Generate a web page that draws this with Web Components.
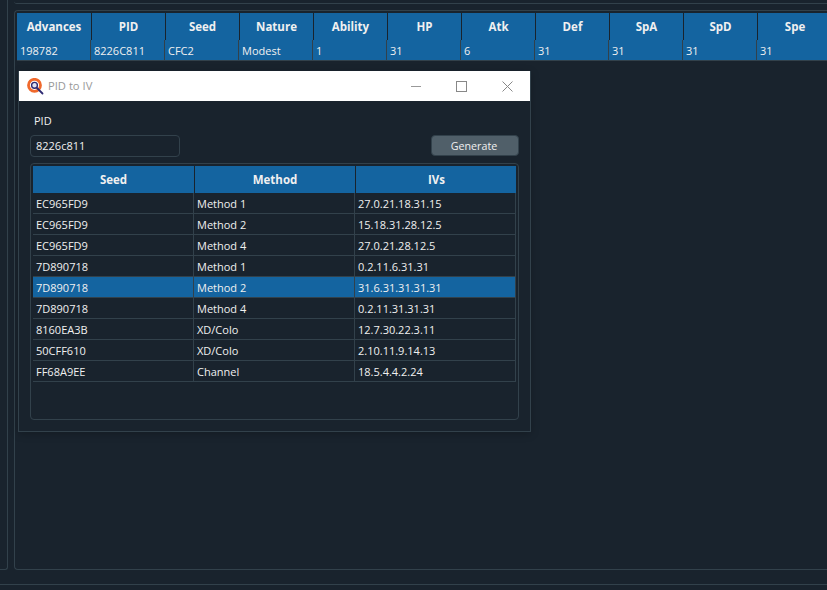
<!DOCTYPE html>
<html>
<head>
<meta charset="utf-8">
<title>PID to IV</title>
<style>
    html, body { margin: 0; height: 100%; background: #19232d; overflow: hidden; }
    body { font: 11px "Open Sans", "Noto Sans", "Liberation Sans", sans-serif; color: #f0f0f0; }
</style>
</head>
<body>
<main-shell>
    <result-table slot="table" widths="74,74,74,74,74,74,74,74,74,74,74" header-height="27" row-height="20"
        headers="Advances,PID,Seed,Nature,Ability,HP,Atk,Def,SpA,SpD,Spe"
        rows="198782,8226C811,CFC2,Modest,1,31,6,31,31,31,31" selected="0"></result-table>
    <tool-window slot="window" heading="PID to IV">
        <pid-form>
            <result-table widths="161,161,161" header-height="27" row-height="20" selected="4"
                headers="Seed,Method,IVs"
                rows="EC965FD9,Method 1,27.0.21.18.31.15|EC965FD9,Method 2,15.18.31.28.12.5|EC965FD9,Method 4,27.0.21.28.12.5|7D890718,Method 1,0.2.11.6.31.31|7D890718,Method 2,31.6.31.31.31.31|7D890718,Method 4,0.2.11.31.31.31|8160EA3B,XD/Colo,12.7.30.22.3.11|50CFF610,XD/Colo,2.10.11.9.14.13|FF68A9EE,Channel,18.5.4.4.2.24"></result-table>
        </pid-form>
    </tool-window>
</main-shell>

<script>
// old QDarkStyle palette
// bg #19232d, border #32414b, button #505f69, selected #1464a0

class ResultTable extends HTMLElement {
    connectedCallback() {
        this.attachShadow({ mode: 'open' });
        const widths = this.getAttribute('widths').split(',').map(Number);
        const headers = this.getAttribute('headers').split(',');
        const rows = this.getAttribute('rows').split('|').map(r => r.split(','));
        const selected = Number(this.getAttribute('selected'));
        const columns = widths.map(w => `${w}px`).join(' ');
        // header sections sit one pixel right of the body grid lines
        const headColumns = widths.map((w, i) => `${i === 0 ? w + 1 : w}px`).join(' ');

        this.shadowRoot.innerHTML = `
            <style>
                :host { display: block; }
                .row { display: grid; }
                .head {
                    grid-template-columns: ${headColumns};
                    height: ${this.getAttribute('header-height')}px;
                    background: #1464a0;
                    font-size: 11.5px;
                    font-weight: 700;
                    color: #f0f0f0;
                }
                .head span {
                    display: flex;
                    align-items: center;
                    justify-content: center;
                    border-right: 1px solid #19232d;
                    box-sizing: border-box;
                }
                .head span:last-child { border-right: 0; }
                .body {
                    grid-template-columns: ${columns};
                    height: ${this.getAttribute('row-height')}px;
                    border-bottom: 1px solid #32414b;
                }
                .body span {
                    display: flex;
                    align-items: center;
                    padding-left: 4px;
                    border-right: 1px solid #32414b;
                    box-sizing: border-box;
                    margin-left: -1px;
                    white-space: nowrap;
                    overflow: hidden;
                }
                .body span:first-child { margin-left: 0; padding-left: 3px; }
                .on { background: #1464a0; }
            </style>
            <div class="row head">${headers.map(h => `<span>${h}</span>`).join('')}</div>
            ${rows.map((r, i) => `
                <div class="row body ${i === selected ? 'on' : ''}">${r.map(c => `<span>${c}</span>`).join('')}</div>
            `).join('')}
        `;
    }
}

class PidForm extends HTMLElement {
    connectedCallback() {
        this.attachShadow({ mode: 'open' });
        this.shadowRoot.innerHTML = `
            <style>
                :host {
                    display: flex;
                    flex-direction: column;
                    height: 100%;
                    padding: 12px 11px 11px;
                    box-sizing: border-box;
                }
                label { height: 22px; padding-left: 4px; line-height: 15px; }
                .controls {
                    display: flex;
                    justify-content: space-between;
                    align-items: flex-start;
                    height: 28px;
                }
                .input {
                    width: 150px;
                    height: 22px;
                    box-sizing: border-box;
                    border: 1px solid #32414b;
                    border-radius: 4px;
                    padding-left: 5px;
                    line-height: 20px;
                }
                .button {
                    width: 88px;
                    height: 21px;
                    box-sizing: border-box;
                    border: 1px solid #32414b;
                    border-radius: 4px;
                    background: #505f69;
                    text-align: center;
                    font-size: 10.7px;
                    line-height: 20px;
                    padding-right: 2px;
                }
                .frame {
                    flex: 1;
                    border: 1px solid #32414b;
                    border-radius: 4px;
                    padding: 2px;
                }
            </style>
            <label>PID</label>
            <div class="controls">
                <div class="input">8226c811</div>
                <div class="button">Generate</div>
            </div>
            <div class="frame"><slot></slot></div>
        `;
    }
}

class ToolWindow extends HTMLElement {
    connectedCallback() {
        this.attachShadow({ mode: 'open' });
        this.shadowRoot.innerHTML = `
            <style>
                :host {
                    display: flex;
                    flex-direction: column;
                    width: 513px;
                    height: 361px;
                    box-sizing: border-box;
                    border: 1px solid #32414b;
                    border-top: 0;
                    background: #19232d;
                    box-shadow: 0 2px 8px rgba(0, 0, 0, 0.22);
                }
                .title {
                    display: flex;
                    align-items: center;
                    height: 30px;
                    flex: none;
                    background: #fff;
                    color: #999;
                    font-size: 11.2px;
                }
                .title svg { display: block; flex: none; }
                .logo { margin: 0 4px 0 8px; }
                .name { flex: 1; padding-bottom: 1px; }
                .btn { width: 46px; height: 30px; display: flex; align-items: center; justify-content: center; }
                .body { flex: 1; min-height: 0; }
            </style>
            <div class="title">
                <svg class="logo" width="17" height="17" viewBox="0 0 17 17">
                    <circle cx="7.5" cy="7.3" r="6" fill="none" stroke="#f0692c" stroke-width="2.8"/>
                    <circle cx="7.5" cy="7.3" r="2.9" fill="#dfe2f2" stroke="#2e2a72" stroke-width="1.4"/>
                    <path d="M10 10l5.5 5.5" stroke="#2e2a72" stroke-width="1.8" stroke-linecap="round"/>
                </svg>
                <span class="name">${this.getAttribute('heading')}</span>
                <span class="btn"><svg width="11" height="11"><path d="M1 5.5h10" stroke="#999"/></svg></span>
                <span class="btn"><svg width="11" height="11"><rect x=".5" y=".5" width="10" height="10" fill="none" stroke="#888"/></svg></span>
                <span class="btn"><svg width="11" height="11"><path d="M.5.5l10 10M10.5.5l-10 10" stroke="#888"/></svg></span>
            </div>
            <div class="body"><slot></slot></div>
        `;
    }
}

class MainShell extends HTMLElement {
    connectedCallback() {
        this.attachShadow({ mode: 'open' });
        this.shadowRoot.innerHTML = `
            <style>
                :host {
                    display: grid;
                    grid-template-columns: 8px 1fr;
                    grid-template-rows: 1fr 21px;
                    column-gap: 6px;
                    width: 827px;
                    height: 590px;
                    position: relative;
                    overflow: hidden;
                }
                .side {
                    height: 570px;
                    box-sizing: border-box;
                    border-right: 1px solid #32414b;
                    border-bottom: 1px solid #32414b;
                    border-bottom-right-radius: 3px;
                }
                .content { display: flex; flex-direction: column; gap: 6px; height: 570px; min-width: 0; }
                .top { height: 4px; box-sizing: border-box; flex: none; border-bottom: 1px solid #32414b; border-bottom-left-radius: 3px; }
                .panel {
                    flex: 1;
                    min-height: 0;
                    border: 1px solid #32414b;
                    border-right: 0;
                    border-top-left-radius: 4px;
                    border-bottom-left-radius: 4px;
                    padding: 2px 0 0 2px;
                    overflow: hidden;
                }
                .status {
                    grid-column: 1 / -1;
                    margin-top: 14px;
                    border-top: 1px solid #32414b;
                }
                .desk { position: absolute; left: 18px; top: 71px; }
            </style>
            <div class="side"></div>
            <div class="content">
                <div class="top"></div>
                <div class="panel"><slot name="table"></slot></div>
            </div>
            <div class="status"></div>
            <div class="desk"><slot name="window"></slot></div>
        `;
    }
}

customElements.define('result-table', ResultTable);
customElements.define('pid-form', PidForm);
customElements.define('tool-window', ToolWindow);
customElements.define('main-shell', MainShell);
</script>
</body>
</html>
